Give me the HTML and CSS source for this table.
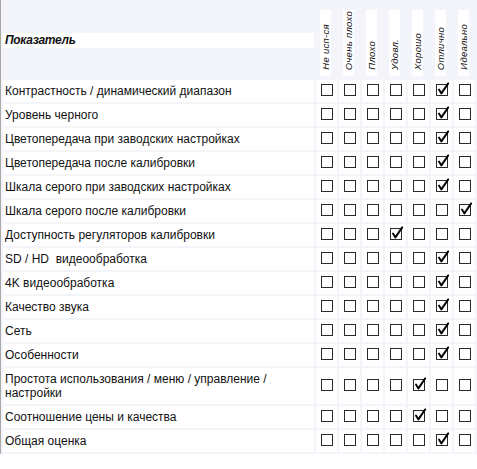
FILE: index.html
```html
<!DOCTYPE html>
<html lang="ru">
<head>
<meta charset="utf-8">
<link rel="stylesheet" href="styles.css">
</head>
<body>
<div class="frame">
<table class="grid">
  <thead>
    <tr>
      <th class="title-cell"><div class="title">Показатель</div></th>
      <th class="col"><div class="strip"><span>Не исп-ся</span></div></th>
      <th class="col"><div class="strip"><span>Очень плохо</span></div></th>
      <th class="col"><div class="strip"><span>Плохо</span></div></th>
      <th class="col"><div class="strip"><span>Удовл.</span></div></th>
      <th class="col"><div class="strip"><span>Хорошо</span></div></th>
      <th class="col"><div class="strip"><span>Отлично</span></div></th>
      <th class="col"><div class="strip"><span>Идеально</span></div></th>
    </tr>
  </thead>
  <tbody id="rows"></tbody>
</table>
</div>
<script src="app.js"></script>
</body>
</html>
```

FILE: app.js
```js
var rows = [
  ["Контрастность / динамический диапазон", 5],
  ["Уровень черного", 5],
  ["Цветопередача при заводских настройках", 5],
  ["Цветопередача после калибровки", 5],
  ["Шкала серого при заводских настройках", 5],
  ["Шкала серого после калибровки", 6],
  ["Доступность регуляторов калибровки", 3],
  ["SD / HD\u00a0 видеообработка", 5],
  ["4K видеообработка", 5],
  ["Качество звука", 5],
  ["Сеть", 5],
  ["Особенности", 5],
  ["Простота использования / меню / управление / настройки", 4],
  ["Соотношение цены и качества", 4],
  ["Общая оценка", 5]
];
var check = '<svg class="tick" viewBox="0 0 14 14" width="14" height="14"><path d="M3 7.6 L5.4 11.4 L12.2 1.4" fill="none" stroke="#000" stroke-width="1.9" stroke-linecap="round" stroke-linejoin="round"/></svg>';
var body = document.getElementById("rows");
var html = "";
rows.forEach(function (r) {
  html += '<tr><td class="label">' + r[0] + '</td>';
  for (var i = 0; i < 7; i++) {
    html += '<td class="cb"><span class="box">' + (i === r[1] ? check : '') + '</span></td>';
  }
  html += '</tr>';
});
body.innerHTML = html;
```

FILE: styles.css
```css
html, body {
  margin: 0;
  padding: 0;
  background: #ffffff;
}
.frame {
  width: 476px;
  border-left: 1px solid #a8a8a8;
  background: #f4f5fa;
  font-family: "Liberation Sans", Arial, sans-serif;
  color: #111;
}
.grid {
  border-collapse: separate;
  border-spacing: 2px;
  width: 476px;
  table-layout: fixed;
}
.title-cell {
  width: 311px;
  height: 76px;
  padding: 0;
  vertical-align: middle;
  text-align: left;
}
.title {
  background: #fff;
  height: 15px;
  line-height: 15px;
  padding-left: 2px;
  font-size: 12px;
  font-weight: bold;
  font-style: italic;
  letter-spacing: -0.3px;
}
.col {
  width: 21px;
  padding: 0;
  vertical-align: top;
}
.strip {
  box-sizing: border-box;
  margin: 8px 0 0 4px;
  width: 11px;
  height: 66px;
  padding-bottom: 6px;
  background: #fff;
  display: flex;
  justify-content: center;
  align-items: flex-end;
}
.strip span {
  writing-mode: vertical-rl;
  transform: rotate(180deg);
  font-size: 9.5px;
  font-weight: normal;
  font-style: italic;
  line-height: 11px;
  letter-spacing: 0.3px;
  white-space: nowrap;
}
.label {
  background: #fff;
  font-size: 12px;
  line-height: 14px;
  padding: 4px 2px;
  height: 14px;
}
.cb {
  background: #fff;
  padding: 0;
  text-align: center;
  vertical-align: middle;
}
.box {
  position: relative;
  display: inline-block;
  width: 10px;
  height: 10px;
  border: 1px solid #2a2a2a;
  background: #fff;
  vertical-align: middle;
  margin-top: -3px;
  margin-left: 1px;
}
.tick {
  position: absolute;
  left: -1px;
  top: -3px;
}
```
